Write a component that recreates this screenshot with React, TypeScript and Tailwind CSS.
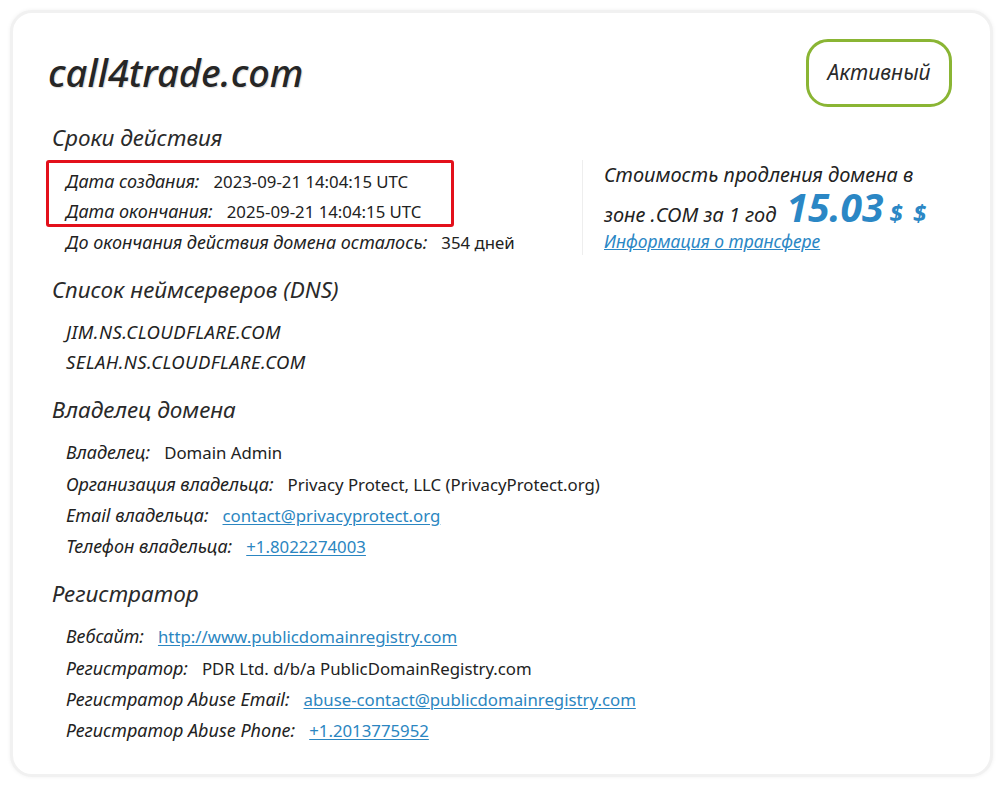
import React from "react";

const F = { fontFamily: '"Noto Sans", "Open Sans", sans-serif' };

function Row({ label, value, link, h = "h-[31.3px] leading-[31.3px]" }: { label: string; value: string; link?: boolean; h?: string }) {
  return (
    <div className={`flex items-baseline whitespace-nowrap ${h}`}>
      <span className="italic text-[18px] text-[#222] mr-[14px]">{label}</span>
      {link ? (
        <a className="text-[16.8px] text-[#2b86c1] underline underline-offset-2">{value}</a>
      ) : (
        <span className="text-[16.8px] text-[#222]">{value}</span>
      )}
    </div>
  );
}

function H({ children, className = "" }: { children: React.ReactNode; className?: string }) {
  return <h2 className={`italic text-[22.5px] text-[#2a2a2a] leading-[30px] ${className}`}>{children}</h2>;
}

export default function App() {
  return (
    <div className="w-[1003px] h-[787px] bg-white p-[10px]" style={F}>
      <div className="h-full rounded-[22px] bg-white border-[3px] border-[#f1f1f1] shadow-[0_0_4px_rgba(0,0,0,0.06)] pl-[39px] pr-[38px] pt-[26px]">
        <div className="flex items-center justify-between h-[68px]">
          <h1 className="ml-[-4px] mt-[-3px] italic font-medium text-[38px] text-[#262626] [text-shadow:1px_1px_1px_rgba(0,0,0,0.15)] leading-[48px]">
            call4trade.com
          </h1>
          <div className="w-[146px] h-[68px] rounded-[22px] border-[3px] border-[#8ab534] flex items-center justify-center italic text-[21px] text-[#2a2a2a]">
            Активный
          </div>
        </div>

        <H className="mt-[16px]">Сроки действия</H>
        <div className="flex mt-[7px] h-[97px]">
          <div className="w-[530px]">
            <div className="ml-[-6px] w-[408px] h-[67px] border-[3px] border-[#e3101b] rounded-[3px] pl-[17px] pt-[3px]">
              <Row label="Дата создания:" value="2023-09-21 14:04:15 UTC" h="h-[30px] leading-[30px]" />
              <Row label="Дата окончания:" value="2025-09-21 14:04:15 UTC" h="h-[30px] leading-[30px]" />
            </div>
            <div className="pl-[14px]">
              <Row label="До окончания действия домена осталось:" value="354 дней" h="h-[30px] leading-[30px]" />
            </div>
          </div>
          <div className="w-px h-[95px] bg-[#eeeeee]" />
          <div className="pl-[21px] pt-[1px]">
            <div className="italic text-[20px] text-[#222] leading-[28px] h-[28px]">Стоимость продления домена в</div>
            <div className="flex items-baseline italic text-[20px] text-[#222] h-[36px] leading-[36px] whitespace-nowrap">
              <span>зоне .COM за 1 год</span>
              <span className="ml-[10px] text-[39px] leading-[36px] font-bold text-[#2b87c5]">15.03</span>
              <span className="ml-[6px] text-[24px] leading-[36px] font-bold text-[#2b87c5] tracking-[2px]">$ $</span>
            </div>
            <a className="block mt-[2px] italic text-[17.5px] text-[#2b87c5] underline leading-[28px]">Информация о трансфере</a>
          </div>
        </div>

        <H className="mt-[18px]">Список неймсерверов (DNS)</H>
        <div className="pl-[14px] mt-[12px] italic text-[18.5px] tracking-[0.4px] text-[#222]">
          <div className="leading-[30px]">JIM.NS.CLOUDFLARE.COM</div>
          <div className="leading-[30px]">SELAH.NS.CLOUDFLARE.COM</div>
        </div>

        <H className="mt-[18px]">Владелец домена</H>
        <div className="pl-[14px] mt-[12.4px]">
          <Row label="Владелец:" value="Domain Admin" />
          <Row label="Организация владельца:" value="Privacy Protect, LLC (PrivacyProtect.org)" />
          <Row label="Email владельца:" value="contact@privacyprotect.org" link />
          <Row label="Телефон владельца:" value="+1.8022274003" link />
        </div>

        <H className="mt-[16.4px]">Регистратор</H>
        <div className="pl-[14px] mt-[12.4px]">
          <Row label="Вебсайт:" value="http://www.publicdomainregistry.com" link />
          <Row label="Регистратор:" value="PDR Ltd. d/b/a PublicDomainRegistry.com" />
          <Row label="Регистратор Abuse Email:" value="abuse-contact@publicdomainregistry.com" link />
          <Row label="Регистратор Abuse Phone:" value="+1.2013775952" link />
        </div>
      </div>
    </div>
  );
}
